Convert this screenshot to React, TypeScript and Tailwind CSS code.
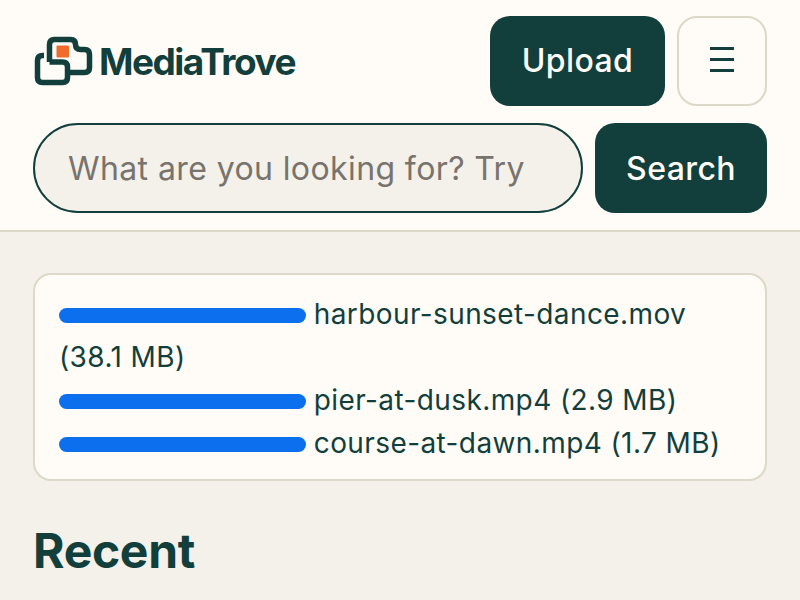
const font = { fontFamily: 'Inter, "Liberation Sans", sans-serif' };

function Logo() {
  return (
    <div className="flex items-center">
      <svg width="66" height="50" viewBox="0 0 66 50" className="shrink-0" fill="none">
        <path
          d="M16.500 26V8.500Q16.500 3.500 21.500 3.500H37.500Q42.500 3.500 42.500 8.500V8.500Q42.500 13.500 47.500 13.500H51.500Q56.500 13.500 56.500 18.500V31.500Q56.500 36.500 51.500 36.500H37"
          stroke="#123f3c"
          strokeWidth="5.500"
        />
        <path
          d="M16.500 26H29.500Q34.500 26 34.500 31V41.500Q34.500 46.500 29.500 46.500H9.500Q4.500 46.500 4.500 41.500V24.500Q4.500 19.500 9.500 19.500H11"
          stroke="#123f3c"
          strokeWidth="5.500"
        />
        <rect x="23.500" y="9.500" width="12.500" height="12" rx="1" fill="#f26b2a" />
      </svg>
      <span className="text-[37px] font-bold tracking-[-1.5px] text-[#123f3c] leading-none">MediaTrove</span>
    </div>
  );
}

function Bar() {
  return <span className="inline-block w-[246.5px] h-[15px] rounded-full bg-[#0b6fee] align-[1px]" />;
}

export default function App() {
  return (
    <div className="h-[600px] overflow-hidden bg-[#f3f1e9] tracking-[0.4px]" style={font}>
      <header className="h-[232px] bg-[#fffcf7] border-b-2 border-[#ddd8c7] px-[33px] pt-4">
        <div className="flex items-center justify-between">
          <Logo />
          <div className="flex gap-3">
            <button className="w-[175px] h-[90px] rounded-[20px] bg-[#123f3c] text-[#fffcf7] text-[32px] font-medium">Upload</button>
            <button className="w-[90px] h-[90px] rounded-[20px] border-2 border-[#ddd8c7] flex items-center justify-center text-[#123f3c]">
              <svg width="24" height="26" viewBox="0 0 24 26" stroke="currentColor" strokeWidth="3" className="-mt-1">
                <path d="M0 2.500H24M0 13.500H24M0 24.500H24" />
              </svg>
            </button>
          </div>
        </div>
        <div className="flex gap-3 mt-[17px]">
          <div className="flex-1 h-[90px] rounded-full bg-[#f3f1e9] border-2 border-[#123f3c] pl-[33px] pt-[2px] flex items-center overflow-hidden whitespace-nowrap text-[32px] text-[#78736d]">
            What are you looking for? Try
          </div>
          <button className="w-[172px] h-[90px] pt-[2px] rounded-[20px] bg-[#123f3c] text-[#fffcf7] text-[32px] font-medium">Search</button>
        </div>
      </header>
      <main className="px-[33px] pt-[41px]">
        <div className="h-[208px] rounded-[18px] border-2 border-[#ddd8c7] bg-[#fffcf7] px-6 pt-[18px] text-[28px] leading-[43px] text-[#123f3c]">
          <div><Bar /> harbour-sunset-dance.mov (38.1 MB)</div>
          <div><Bar /> pier-at-dusk.mp4 (2.9 MB)</div>
          <div><Bar /> course-at-dawn.mp4 (1.7 MB)</div>
        </div>
        <h2 className="mt-[38px] text-[48px] leading-[64px] font-bold tracking-[-0.3px] text-[#123f3c]">Recent</h2>
      </main>
    </div>
  );
}
